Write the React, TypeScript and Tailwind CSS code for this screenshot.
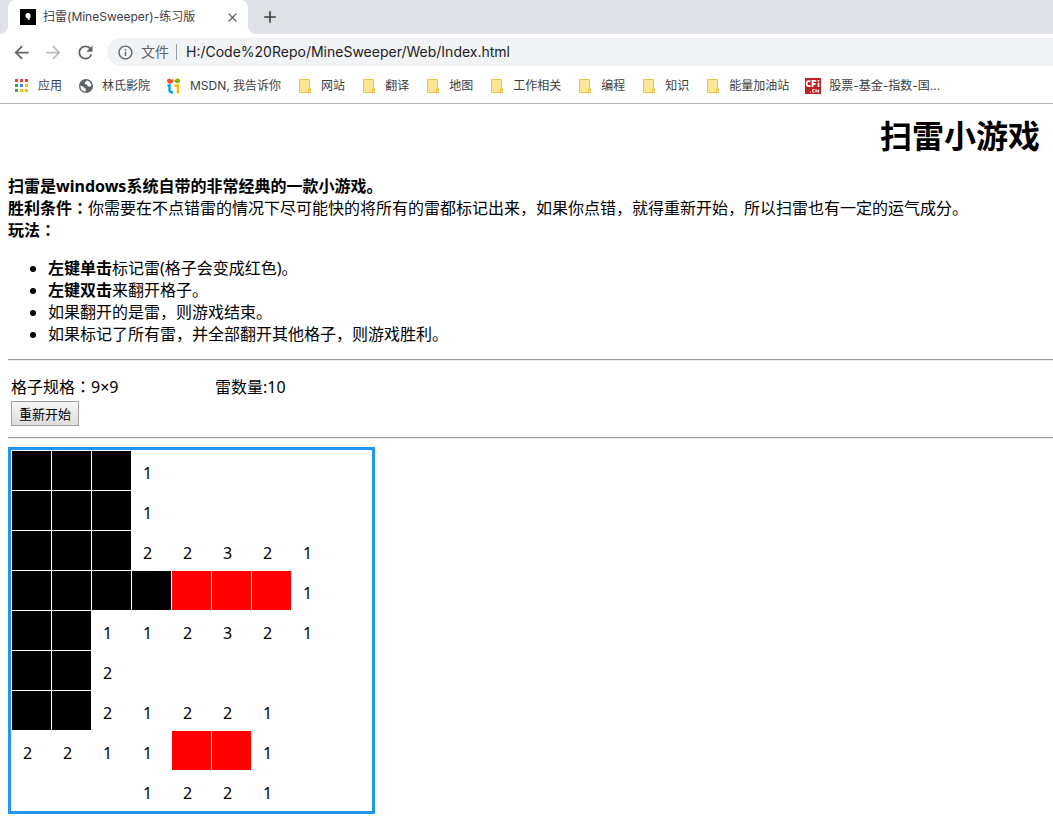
import React, { useState } from 'react';
import { MdAdd, MdArrowBack, MdArrowForward, MdClose, MdInfoOutline, MdRefresh } from 'react-icons/md';

// '#' covered, 'F' marked as a mine, '.' open and empty, digits are open cells
const START = [
  '###1.....',
  '###1.....',
  '###22321.',
  '####FFF1.',
  '##112321.',
  '##2......',
  '##21221..',
  '2211FF1..',
  '...1221..',
];

const AppsIcon = () => (
  <svg width="16" height="16" viewBox="0 0 16 16" shapeRendering="crispEdges">
    <path fill="#ea4335" d="M1 1h3v3H1zM6 1h3v3H6zM11 1h3v3h-3z" />
    <path fill="#34a853" d="M1 6h3v3H1zM1 11h3v3H1z" />
    <path fill="#4285f4" d="M6 6h3v3H6z" />
    <path fill="#fbbc04" d="M11 6h3v3h-3zM6 11h3v3H6zM11 11h3v3h-3z" />
  </svg>
);

const GlobeIcon = () => (
  <svg width="16" height="16" viewBox="0 0 16 16">
    <circle cx="8" cy="8" r="7" fill="#5f6368" />
    <path fill="#fff" d="M2.300 7.500l3.200 1.200 1 1.500 1.500.6-.5 2.700C4.500 13.500 2.300 11 2.300 7.500zM9 2.500l-2 1.700-.5 1.800 2.500.5.8 1.700 2.200.6 1.500-1.300C13.300 5 11.500 3 9 2.500z" />
  </svg>
);

const MsdnIcon = () => (
  <svg width="16" height="16" viewBox="0 0 16 16">
    <path fill="#f25022" d="M1 2.500C1 1 2.500.5 4 1l1.500.7L7.500 1 7 4.500 5 5.500C3 6 1 5 1 2.500z" />
    <path fill="#7fba00" d="M8 3l2-2c2-1 4.500 0 4 2.500C13.500 6 10 6 8 3z" />
    <path d="M1.500 7.500h2V12q0 2.500 3.500 2.500" fill="none" stroke="#00a4ef" strokeWidth="2.400" />
    <path d="M8.500 7.500h3.500v8" fill="none" stroke="#ffb900" strokeWidth="2.400" />
  </svg>
);

const FolderIcon = () => (
  <svg width="16" height="16" viewBox="0 0 16 16">
    <path d="M2.500 1.500h10v9h1v4h-11z" fill="#ffe694" stroke="#e8c34a" />
    <path d="M11.500 14.500v-3.500h1.500" fill="none" stroke="#e8c34a" />
  </svg>
);

const CfiIcon = () => (
  <svg width="16" height="16" viewBox="0 0 16 16">
    <path fill="#bf2026" d="M0 0h16v16H0z" />
    <g fill="none" stroke="#fff" strokeWidth="1.800">
      <path d="M5.500 3.300Q1.600 2.200 1.600 5.500T5.500 8" />
      <path d="M7.500 9V3h3.700M7.500 6h3" />
      <path d="M13.500 4.700V9M13.500 2v1.500" />
    </g>
    <path d="M9.500 11.500H7.700v2.500h1.800M11 14.500v-3l2.500 3v-3" fill="none" stroke="#fff" strokeWidth="1" />
    <path fill="#fff" d="M5 13.500h1v1H5z" />
  </svg>
);

const FavIcon = () => (
  <svg width="16" height="16" viewBox="0 0 16 16">
    <path fill="#000" d="M0 0h16v16H0z" />
    <path fill="#fff" d="M7 4h2l1.500 1.500v3L9.500 9.500V11H8L7.500 9.500 5.500 8V5.500z" />
  </svg>
);

const BOOKMARKS = [
  { label: '应用', icon: AppsIcon },
  { label: '林氏影院', icon: GlobeIcon },
  { label: 'MSDN, 我告诉你', icon: MsdnIcon },
  { label: '网站', icon: FolderIcon },
  { label: '翻译', icon: FolderIcon },
  { label: '地图', icon: FolderIcon },
  { label: '工作相关', icon: FolderIcon },
  { label: '编程', icon: FolderIcon },
  { label: '知识', icon: FolderIcon },
  { label: '能量加油站', icon: FolderIcon },
  { label: '股票-基金-指数-国...', icon: CfiIcon },
];

const BrowserBar = () => (
  <header className="bg-white border-b border-[#b4b4b4] text-[#3c4043] font-['Inter','Noto_Sans_CJK_SC',sans-serif]">
    {/* Tabs */}
    <div className="flex items-end h-[34px] bg-[#dee1e6]">
      <div className="w-2 h-2 bg-white">
        <div className="w-2 h-2 bg-[#dee1e6] rounded-br-lg" />
      </div>
      <div className="flex items-center w-60 h-[34px] pl-3 pr-2 bg-white rounded-t-lg text-xs">
        <FavIcon />
        <span className="ml-[7px] flex-1 whitespace-nowrap">扫雷(MineSweeper)-练习版</span>
        <button aria-label="关闭" className="text-[#5f6368]"><MdClose size={15} /></button>
      </div>
      <div className="w-2 h-2 bg-white">
        <div className="w-2 h-2 bg-[#dee1e6] rounded-bl-lg" />
      </div>
      <button aria-label="新标签页" className="h-[34px] ml-1 text-[#3c4043]"><MdAdd size={20} /></button>
    </div>

    {/* Address */}
    <div className="flex items-center h-9 pl-[11px] text-[#5f6368]">
      <button aria-label="后退"><MdArrowBack size={21} /></button>
      <button aria-label="前进" className="ml-[11px] text-[#babcbe]"><MdArrowForward size={21} /></button>
      <button aria-label="刷新" className="ml-[11px]"><MdRefresh size={21} /></button>
      <div className="flex items-center flex-1 h-7 ml-[11px] pl-[10px] bg-[#f1f3f4] rounded-l-full text-sm">
        <MdInfoOutline size={17} />
        <label htmlFor="url" className="ml-[7px] pr-[7px] leading-4 border-r border-[#9aa0a6] whitespace-nowrap">文件</label>
        <input
          id="url"
          className="flex-1 ml-[9px] bg-transparent text-[#202124] outline-none"
          defaultValue="H:/Code%20Repo/MineSweeper/Web/Index.html"
        />
      </div>
    </div>

    {/* Bookmarks */}
    <nav className="flex items-center gap-4 h-[33px] pb-[2px] pl-[14px] text-xs overflow-hidden">
      {BOOKMARKS.map(({ label, icon: Icon }) => (
        <a key={label} href="#" className="flex items-center gap-2 shrink-0 whitespace-nowrap">
          <Icon />
          {label}
        </a>
      ))}
    </nav>
  </header>
);

const Divider = () => <hr className="border-t border-b border-t-[#9a9a9a] border-b-[#eeeeee]" />;

// Full-width colon, centred in its box
const Colon = () => <span className="leading-none font-['Noto_Sans_CJK_JP',sans-serif]">：</span>;

export default function App() {
  const [cells, setCells] = useState(START.join('').split(''));

  const markCell = (index: number) => {
    setCells(cells.map((c, i) => (i === index && c === '#' ? 'F' : c)));
  };

  const openCell = (index: number) => {
    setCells(cells.map((c, i) => (i === index && (c === '#' || c === 'F') ? '.' : c)));
  };

  return (
    <div className="min-h-screen bg-white text-black font-['Noto_Sans','Noto_Sans_CJK_SC',sans-serif]">
      <BrowserBar />
      <main className="pl-2 pb-6">
        <h1 className="pt-2 pr-[13px] text-[32px] leading-12 font-bold text-right">扫雷小游戏</h1>

        <div className="mt-[15px] leading-[22px]">
          <p className="font-bold">扫雷是windows系统自带的非常经典的一款小游戏。</p>
          <p>
            <b>胜利条件<Colon /></b>你需要在不点错雷的情况下尽可能快的将所有的雷都标记出来，如果你点错，就得重新开始，所以扫雷也有一定的运气成分。
          </p>
          <p className="font-bold">玩法<Colon /></p>
          <ul className="mt-4 mb-[14px] pl-10 list-disc">
            <li><b>左键单击</b>标记雷(格子会变成红色)。</li>
            <li><b>左键双击</b>来翻开格子。</li>
            <li>如果翻开的是雷，则游戏结束。</li>
            <li>如果标记了所有雷，并全部翻开其他格子，则游戏胜利。</li>
          </ul>
        </div>

        <Divider />
        <div className="pl-[3px] pt-[15px] pb-[11px]">
          <div className="flex leading-[22px]">
            <span className="w-[204px]">格子规格<Colon />9×9</span>
            <span>雷数量:10</span>
          </div>
          <button
            onClick={() => setCells(Array(81).fill('#'))}
            className="block h-[25px] mt-[3px] px-[7px] text-[13px] leading-5 border border-[#a0a0a0] bg-linear-to-b from-[#f6f6f6] to-[#dddddd]"
          >
            重新开始
          </button>
        </div>
        <Divider />

        {/* Board */}
        <div className="grid grid-cols-9 gap-px w-fit mt-2 p-px border-3 border-[#2196f3]">
          {cells.map((cell, i) => {
            if (cell === '#' || cell === 'F') {
              return (
                <button
                  key={i}
                  aria-label={cell === 'F' ? '已标记' : '未翻开'}
                  onClick={() => markCell(i)}
                  onDoubleClick={() => openCell(i)}
                  className={cell === 'F' ? 'size-[39px] bg-[#ff0000]' : 'size-[39px] bg-black'}
                />
              );
            }
            return (
              <div key={i} className="size-[39px] pt-[11px] pr-2 leading-[22px] text-center">
                {cell === '.' ? '' : cell}
              </div>
            );
          })}
        </div>
      </main>
    </div>
  );
}
